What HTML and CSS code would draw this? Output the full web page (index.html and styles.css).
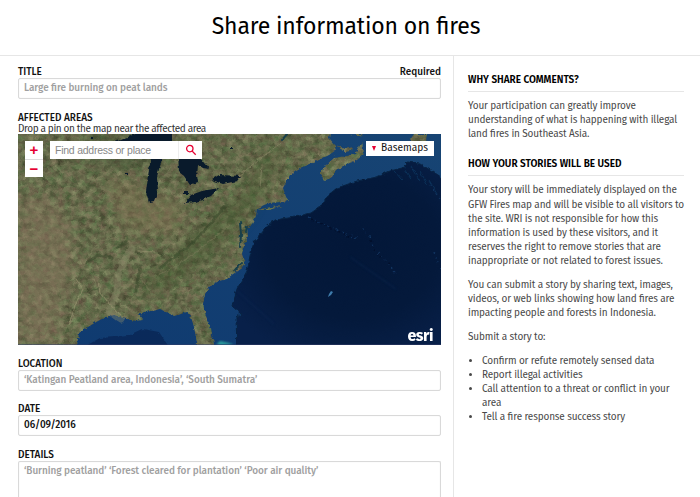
FILE: index.html
```html
<!DOCTYPE html>
<html lang="en">
<head>
<meta charset="utf-8">
<title>Share information on fires</title>
<link rel="stylesheet" href="styles.css">
</head>
<body>
<header class="page-header"><h1>Share information on fires</h1></header>
<div class="columns">
  <main class="form">
    <section class="field">
      <div class="label-row"><label>TITLE</label><span class="required">Required</span></div>
      <div class="input hint">Large fire burning on peat lands</div>
    </section>
    <section class="field map-field">
      <div class="label-row"><label class="areas">AFFECTED AREAS</label></div>
      <p class="help">Drop a pin on the map near the affected area</p>
      <div class="map">
        <svg class="imagery" viewBox="18 134 423 211" preserveAspectRatio="none">
          <defs>
            <filter id="terrain" x="0" y="0" width="100%" height="100%" color-interpolation-filters="sRGB">
              <feTurbulence type="fractalNoise" baseFrequency=".14 .17" numOctaves="5" seed="8" result="n"/>
              <feColorMatrix in="n" values=".28 .18 0 0 .165  .14 .3 0 0 .195  .18 .18 0 0 .11  0 0 0 0 1" result="c"/>
              <feComposite in="c" in2="SourceAlpha" operator="in" result="ground"/>
              <feTurbulence type="fractalNoise" baseFrequency=".3" numOctaves="2" seed="3" result="edge"/>
              <feDisplacementMap in="ground" in2="edge" scale="4" xChannelSelector="R" yChannelSelector="G"/>
            </filter>
            <filter id="rough" x="-5%" y="-5%" width="110%" height="110%" color-interpolation-filters="sRGB">
              <feTurbulence type="fractalNoise" baseFrequency=".2" numOctaves="2" seed="4"/>
              <feDisplacementMap in="SourceGraphic" scale="4" xChannelSelector="R" yChannelSelector="G"/>
            </filter>
            <filter id="soft" x="-20%" y="-20%" width="140%" height="140%"><feGaussianBlur stdDeviation="7"/></filter>
            <filter id="softer"><feGaussianBlur stdDeviation="1"/></filter>
            <linearGradient id="shelf" x1="0" y1="1" x2="1" y2="0"><stop offset="0" stop-color="#0f3a70"/><stop offset="1" stop-color="#174473"/></linearGradient>
            <radialGradient id="deep" cx=".55" cy=".45" r=".65"><stop offset="0" stop-color="#031738"/><stop offset=".6" stop-color="#04193b"/><stop offset="1" stop-color="#082049"/></radialGradient>
          </defs>
          <rect x="18" y="134" width="423" height="211" fill="url(#shelf)"/>
          <g filter="url(#rough)">
            <path fill="url(#deep)" stroke="#082343" stroke-width="1" d="M408 162l-6 6-12 3-13 6-20 4-20 7-10 8-6 10-10 7-16 4-20 3-12 10-9 12-4 14-3 15-10 18-5 17 9 8-5 4 1 30h215V190l-8-11-12-8-12-7z"/>
            <path fill="#0a2858" d="M82 348l18-10 28-2 15-7 16 3 10 15z" opacity=".9"/>
          </g>
          <path filter="url(#terrain)" fill="#566044" d="M8 124H331L329 139l6 7 1 4-7 5-14 7-12 5-13 8-7 13 3 9 3 4-8 1-12 1-12 5-1 8-4 8-5 4 1 8-5 13-1 5 3 9-5 7-7 4-6 5-8 2-9 5-5 8-2 10 3 12 5 13 4 20h-17l-4-22-3-10-4-5-6 2-7 2-8-4-6-3-8 2-8 1-5 3 4 5-8 1-12-3-9-3-8 2-8 4-10 6-9 6-3 18H8z"/>
          <g filter="url(#terrain)"><path d="M320 173l4 8 8-4 4-7 9-5 12-5 7-6-2-12-4 7-3 5-8 2-13 2-9 8zM337 145l8 4 8-2-1 4-8 1zM351 134l10 2 1-2zM408 143l6-9h13l-1 8zM257 210l14-3 11-1-13 4z"/></g>
          <g opacity=".4" filter="url(#soft)">
            <path fill="#8f7862" d="M18 195l36 3 14 24 8 45-14 32-5 45H18z"/>
            <path fill="#857654" d="M105 178l33 6 46 21-5 31-55-5z"/>
            <path fill="#3c5229" d="M183 245l35-33 29-23 16-39 22-4-21 39-17 31-40 42-40 31-33 4z"/>
            <path fill="#324a29" d="M78 135l85 1 20 17-55 15-44-8z"/>
          </g>
          <g fill="none" stroke-linecap="round" filter="url(#rough)">
            <path stroke="#8a8968" stroke-width="7" opacity=".4" d="M132 249q-9 12-13 22l-2 20-8 20 12 9"/>
            <path stroke="#9a9471" stroke-width="1.2" opacity=".6" d="M98 281l2 11 12 15 9 8M76 279l7 10-8 17-6 19M138 251l16 1"/>
            <path stroke="#858362" stroke-width="1.3" opacity=".4" d="M139 261l1 16 11 16M158 275l19-9 23-17 30-24M85 261l15-20 19-4M182 294l28-13"/>
            <path stroke="#314326" stroke-width="3" opacity=".45" d="M87 262l12-7 13 3M117 247l10-4M160 268l35-27 32-37M140 266l-4 25"/>
            <path stroke="#183f4b" stroke-width="2" d="M240 223l1 11-1 13M247 226l-1 6M282 140l6-7M235 270l7-8"/>
            <path stroke="#8a8968" stroke-width="1" opacity=".6" d="M238 177l20-17 23-17M262 165l-2 23"/>
          </g>
          <g fill="#091a2b" filter="url(#rough)">
            <path d="M113 143l14-6 14-5h31v12l-10-3-16 2-14 6 3-8z"/>
            <path d="M151 158h12l-4 11-2 9 1 12-4 11-5 1-3-10 2-16z"/>
            <path d="M178 151l18 2 13 16-6-1-5-3-1 10 1 7-8 3-6-9-5-4z"/>
            <path d="M211 180l8-5 22 1-4 5-14 3z"/>
            <path d="M184 203l7-8 11-4 17-3-8 8-14 6z"/>
            <path d="M184 191h4v3h-4zM125 172h3v2h-3zM90 137h3v2h-3zM230 147h3v2h-3z"/>
          </g>
          <g fill="none" stroke="#123460" stroke-width="1.5" stroke-dasharray="2 4 1 3" filter="url(#rough)">
            <path d="M309 218l17 7 22 10 10 4M362 228l8 9 4 13 14 12 8 13M430 185l10 14M434 252l6 16"/>
            <path stroke="#020f2b" d="M311 219l20 9 22 10M371 240l4 12 15 12"/>
          </g>
          <path fill="none" stroke="#0b3159" d="M394 171l8 9M403 166l9 13M411 166l9 15M420 172l8 14M429 180l8 13" filter="url(#rough)"/>
          <path stroke="#0c2a54" stroke-width="2" opacity=".35" d="M236 290l38 34M350 257l46 32" filter="url(#softer)"/>
          <path fill="#3e7bab" d="M329 294l2-3 2 1-2 3-3 2z"/>
          <path fill="#2c9e9d" d="M216 345l4-4 9 2 5 2z" filter="url(#softer)"/>
          <path stroke="#38416a" d="M18 344.8h423" opacity=".7"/>
        </svg>
        <div class="zoom"><span>+</span><span>−</span></div>
        <div class="search"><span class="search-text">Find address or place</span><span class="search-button"><svg viewBox="0 0 12 12"><circle cx="4.8" cy="4.6" r="3.2"/><path d="M7.2 7.1l3.5 3.6"/></svg></span></div>
        <div class="basemaps"><i></i><span>Basemaps</span></div>
        <span class="esri">esri</span>
      </div>
    </section>
    <section class="field">
      <div class="label-row"><label>LOCATION</label></div>
      <div class="input hint location">‘Katingan Peatland area, Indonesia’, ‘South Sumatra’</div>
    </section>
    <section class="field">
      <div class="label-row"><label>DATE</label></div>
      <div class="input date">06/09/2016</div>
    </section>
    <section class="field last">
      <div class="label-row"><label>DETAILS</label></div>
      <div class="input hint details">‘Burning peatland’ ‘Forest cleared for plantation’ ‘Poor air quality’</div>
    </section>
  </main>
  <aside class="info">
    <h2>WHY SHARE COMMENTS?</h2>
    <p>Your participation can greatly improve<br>understanding of what is happening with illegal<br>land fires in Southeast Asia.</p>
    <h2 class="second">HOW YOUR STORIES WILL BE USED</h2>
    <p>Your story will be immediately displayed on the<br>GFW Fires map and will be visible to all visitors to<br>the site. WRI is not responsible for how this<br>information is used by these visitors, and it<br>reserves the right to remove stories that are<br>inappropriate or not related to forest issues.</p>
    <p>You can submit a story by sharing text, images,<br>videos, or web links showing how land fires are<br>impacting people and forests in Indonesia.</p>
    <p>Submit a story to:</p>
    <ul>
      <li>Confirm or refute remotely sensed data</li>
      <li>Report illegal activities</li>
      <li>Call attention to a threat or conflict in your<br>area</li>
      <li>Tell a fire response success story</li>
    </ul>
  </aside>
</div>
</body>
</html>
```
FILE: styles.css
```css
* { box-sizing: border-box; }
body { margin: 0; width: 700px; height: 497px; overflow: hidden; background: #fff; color: #111; font-family: "Fira Sans", "Noto Sans", sans-serif; font-size: 10px; font-feature-settings: "liga" 1; white-space: nowrap; }
.page-header { height: 56px; border-bottom: 1px solid #e6e6e6; text-align: center; }
h1 { margin: 0; padding-right: 8px; font-size: 23px; line-height: 53px; font-weight: 400; color: #000; letter-spacing: -.17px; }
.columns { display: flex; height: 441px; }
.form { width: 454px; padding: 9px 12px 0 18px; border-right: 1px solid #e6e6e6; }
.field { margin-bottom: 11.6px; }
.last { margin-bottom: 0; }
.label-row { display: flex; justify-content: space-between; height: 13px; line-height: 14px; font-weight: 500; }
.input { height: 21px; padding: 0 5px; border: 1px solid #d9d9d9; border-radius: 2px; line-height: 19px; font-weight: 500; letter-spacing: -.05px; box-shadow: inset 0 0 1px #ddd; }
.hint { color: #a0a0a0; }
.details { height: 37px; border-bottom: 0; border-radius: 2px 2px 0 0; }
.help { margin: 0; height: 10px; line-height: 10px; color: #333; font-size: 10px; letter-spacing: -.38px; }
.map-field .label-row { line-height: 15px; }
.map { position: relative; height: 211px; }
.imagery { display: block; width: 100%; height: 211px; }
.form > .field:first-child { padding-top: .4px; }
.zoom { position: absolute; left: 7px; top: 7px; width: 18px; height: 36px; background: #fff; color: #e60032; text-align: center; font: bold 15px/17px "Liberation Sans", sans-serif; }
.zoom span { display: block; height: 18px; }
.zoom span + span { border-top: 1px solid #ddd; }
.search { position: absolute; left: 32px; top: 7px; width: 152px; height: 18px; display: flex; background: #fff; }
.search-text { width: 129px; padding-left: 5px; color: #888; font: 10.5px/18px "Liberation Sans", sans-serif; letter-spacing: -.24px; border-right: 1px solid #eee; }
.search-button { flex: 1; display: grid; place-items: center; }
.search-button svg { width: 12px; height: 12px; fill: none; stroke: #e60032; stroke-width: 1.3; }
.basemaps { position: absolute; right: 7px; top: 7px; width: 68px; height: 15px; display: flex; align-items: center; gap: 5px; padding-left: 6px; background: #fff; font-size: 10.2px; line-height: 14px; }
.basemaps i { border: 2.5px solid transparent; border-top: 5px solid #e60032; border-bottom: 0; }
.esri { position: absolute; right: 8px; bottom: -1px; color: #fff; font-size: 16px; line-height: 20px; font-weight: 700; letter-spacing: -.5px; }
.info { padding: 17px 16px 0 14px; width: 246px; line-height: 14.1px; color: #484848; letter-spacing: -.15px; }
h2 { margin: 0 0 7px; height: 19px; border-bottom: 1px solid #e6e6e6; font-size: 10px; line-height: 14px; font-weight: 600; color: #000; letter-spacing: 0; }
h2.second + p { padding-top: .5px; }
.info p { margin: 0 0 9.8px; }
.info .second { margin-top: 15.7px; }
ul { margin: 0; padding-left: 14px; }
```
